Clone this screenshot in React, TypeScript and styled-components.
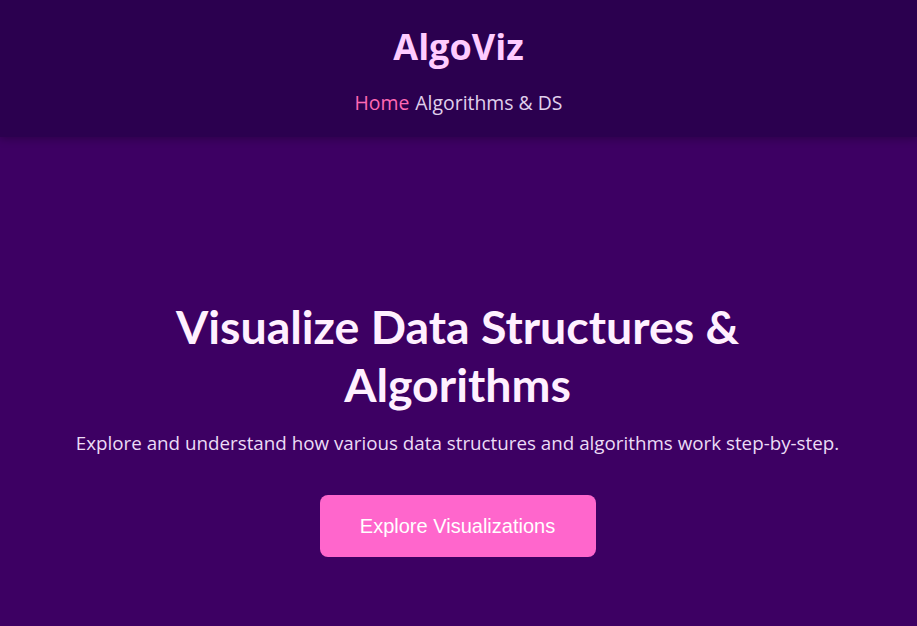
import React from "react";
import styled, { createGlobalStyle } from "styled-components";

const GlobalStyle = createGlobalStyle`
  html, body {
    margin: 0;
    padding: 0;
    background: #3d0063;
  }
  body {
    font-family: "Open Sans", "Noto Sans", sans-serif;
  }
`;

const Page = styled.div`
  min-height: 626px;
  background: #3d0063;
  display: flex;
  flex-direction: column;
`;

const Header = styled.header`
  height: 137px;
  box-sizing: border-box;
  padding-top: 23px;
  background: #2b004f;
  box-shadow: 0 2px 8px rgba(0, 0, 0, 0.25);
  display: flex;
  flex-direction: column;
  align-items: center;
  position: relative;
  z-index: 1;
`;

const Logo = styled.h1`
  margin: 0;
  font-size: 36px;
  line-height: 48px;
  font-weight: 700;
  color: #ffccff;
`;

const Nav = styled.nav`
  margin-top: 19px;
  display: flex;
  gap: 6px;
`;

const NavLink = styled.a<{ active?: boolean }>`
  font-size: 19.4px;
  line-height: 26px;
  color: ${(p) => (p.active ? "#ff69b4" : "#e0d0ec")};
  text-decoration: none;
  cursor: pointer;
`;

const Hero = styled.section`
  flex: 1;
  display: flex;
  flex-direction: column;
  align-items: center;
  padding: 160px 22px 0 20px;
  text-align: center;
`;

const Title = styled.h2`
  margin: 0;
  max-width: 600px;
  font-family: Lato, "Open Sans", sans-serif;
  font-size: 46.5px;
  line-height: 58px;
  font-weight: 700;
  color: #fff0ff;
`;

const Lead = styled.p`
  margin: 17px 0 0;
  font-size: 18.8px;
  line-height: 26px;
  color: #ecdcf6;
`;

const CTA = styled.button`
  margin-top: 39px;
  width: 276px;
  height: 62px;
  border: none;
  border-radius: 8px;
  background: #ff66cc;
  color: #ffffff;
  font-family: "Liberation Sans", Arial, sans-serif;
  font-size: 20px;
  cursor: pointer;
`;

export default function App() {
  return (
    <>
      <GlobalStyle />
      <Page>
        <Header>
          <Logo>AlgoViz</Logo>
          <Nav>
            <NavLink active>Home</NavLink>
            <NavLink>Algorithms &amp; DS</NavLink>
          </Nav>
        </Header>
        <Hero>
          <Title>Visualize Data Structures &amp; Algorithms</Title>
          <Lead>
            Explore and understand how various data structures and algorithms
            work step-by-step.
          </Lead>
          <CTA>Explore Visualizations</CTA>
        </Hero>
      </Page>
    </>
  );
}
